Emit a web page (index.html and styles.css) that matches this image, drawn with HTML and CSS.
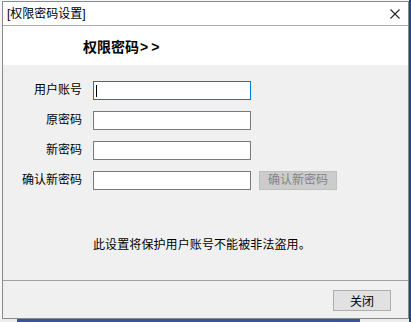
FILE: index.html
```html
<!DOCTYPE html>
<html lang="zh-CN">
<head>
    <meta charset="UTF-8">
    <title>[权限密码设置]</title>
    <link rel="stylesheet" href="styles.css">
</head>
<body>
    <!-- Ventana de dialogo -->
    <div class="window">
        <div class="titlebar">
            <span class="title">[权限密码设置]</span>
            <svg class="close-x" width="10" height="10" viewBox="0 0 10 10">
                <path d="M0.5 0.5 L9.5 9.5 M9.5 0.5 L0.5 9.5" stroke="#222" stroke-width="1.1" fill="none"/>
            </svg>
        </div>

        <div class="header">
            <h1>权限密码<span class="arrows">&gt;&gt;</span></h1>
        </div>

        <div class="content">
            <div class="form">
                <label>用户账号</label>
                <div class="field">
                    <input type="text" class="active">
                    <span class="caret"></span>
                </div>

                <label>原密码</label>
                <div class="field"><input type="password"></div>

                <label>新密码</label>
                <div class="field"><input type="password"></div>

                <label>确认新密码</label>
                <div class="field">
                    <input type="password">
                    <button class="btn-confirm" disabled>确认新密码</button>
                </div>
            </div>

            <p class="note">此设置将保护用户账号不能被非法盗用。</p>
        </div>

        <div class="footer">
            <button class="btn-close">关闭</button>
        </div>
    </div>
</body>
</html>
```

FILE: styles.css
```css
body {
    margin: 0;
    width: 411px;
    height: 322px;
    overflow: hidden;
    font-family: "Liberation Sans", "Noto Sans CJK SC", sans-serif;
    font-size: 12px;
    color: #000;
    /* Escritorio detras de la ventana */
    background:
        linear-gradient(to right, transparent 409px, #26418f 409px),
        linear-gradient(to bottom, transparent 319px, #ececec 319px),
        #f6f6f6;
    position: relative;
}

body::after {
    content: '';
    position: absolute;
    left: 17px;
    top: 319px;
    width: 343px;
    height: 3px;
    background: #3b5497;
}

.window {
    margin: 1px 0 0 2px;
    width: 407px;
    height: 318px;
    box-sizing: border-box;
    border: 1px solid #8a8a8a;
    background: #f0f0f0;
    display: flex;
    flex-direction: column;
}

.titlebar {
    height: 23px;
    background: #fff;
    border-bottom: 1px solid #a9a9a9;
    display: flex;
    align-items: center;
    justify-content: space-between;
    padding: 0 8px 0 4px;
}

.title {
    line-height: 14px;
}

.header {
    height: 39px;
    background: #fff;
    box-sizing: border-box;
    padding: 14px 0 0 80px;
}

.header h1 {
    margin: 0;
    font-size: 14px;
    line-height: 14px;
    font-weight: bold;
}

.arrows {
    letter-spacing: 3px;
    margin-left: 1px;
}

.content {
    flex: 1;
    padding-top: 16px;
}

.form {
    display: grid;
    grid-template-columns: 79px auto;
    column-gap: 11px;
    row-gap: 11px;
}

.form label {
    text-align: right;
    line-height: 19px;
}

.field {
    display: flex;
    gap: 8px;
    position: relative;
}

.field input {
    width: 158px;
    height: 19px;
    box-sizing: border-box;
    border: 1px solid #7a7a7a;
    background: #fff;
    margin: 0;
    padding: 0 3px;
    outline: none;
}

.field input.active {
    border-color: #0078d7;
}

.caret {
    position: absolute;
    left: 3px;
    top: 4px;
    width: 1px;
    height: 12px;
    background: #000;
}

.btn-confirm {
    width: 78px;
    height: 19px;
    margin: 0;
    padding: 0;
    border: 1px solid #bfbfbf;
    background: #cccccc;
    color: #838383;
    font-family: inherit;
    font-size: 12px;
    line-height: 17px;
}

.note {
    margin: 48px 0 0 90px;
    line-height: 14px;
    letter-spacing: 0.1px;
}

.footer {
    height: 38px;
    box-sizing: border-box;
    border-top: 1px solid #a0a0a0;
    display: flex;
    justify-content: flex-end;
    padding: 9px 17px 0 0;
}

.btn-close {
    width: 58px;
    height: 21px;
    margin: 0;
    padding: 0;
    border: 1px solid #adadad;
    background: #e1e1e1;
    font-family: inherit;
    font-size: 12px;
    color: #000;
}
```
